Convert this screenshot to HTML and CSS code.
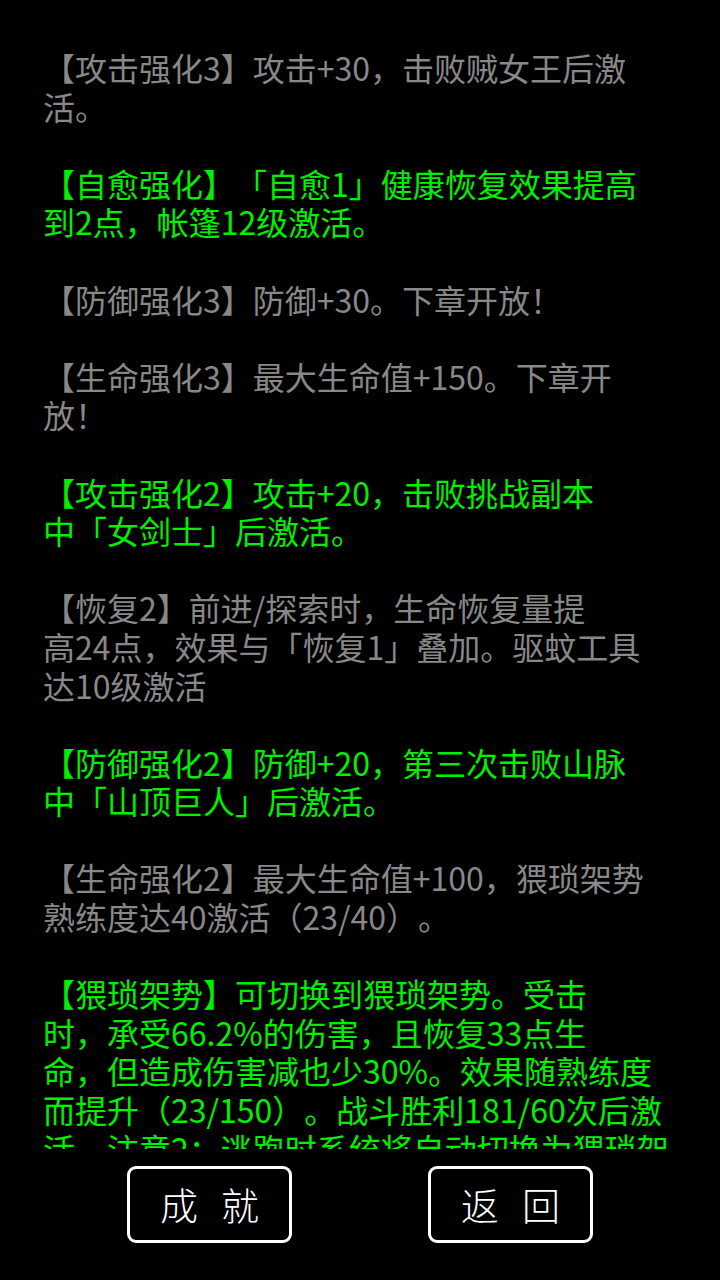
FILE: index.html
```html
<!DOCTYPE html>
<html lang="zh-CN">
<head>
<meta charset="utf-8">
<title>强化</title>
<link rel="stylesheet" href="styles.css">
</head>
<body>
<div class="screen">
  <div class="log">
    <p class="entry off">【攻击强化3】攻击+30，击败贼女王后激<br>活。</p>
    <p class="entry on">【自愈强化】「自愈1」健康恢复效果提高<br>到2点，帐篷12级激活。</p>
    <p class="entry off">【防御强化3】防御+30。下章开放<span class="ctr">！</span></p>
    <p class="entry off">【生命强化3】最大生命值+150。下章开<br>放<span class="ctr">！</span></p>
    <p class="entry on">【攻击强化2】攻击+20，击败挑战副本<br>中「女剑士」后激活。</p>
    <p class="entry off">【恢复2】前进/探索时，生命恢复量提<br>高24点，效果与「恢复1」叠加。驱蚊工具<br>达10级激活</p>
    <p class="entry on">【防御强化2】防御+20，第三次击败山脉<br>中「山顶巨人」后激活。</p>
    <p class="entry off">【生命强化2】最大生命值+100，猥琐架势<br>熟练度达40激活（23/40）。</p>
    <p class="entry on">【猥琐架势】可切换到猥琐架势。受击<br>时，承受66.2%的伤害，且恢复33点生<br>命，但造成伤害减也少30%。效果随熟练度<br>而提升（23/150）。战斗胜利181/60次后激<br>活。注意2：逃跑时系统将自动切换为猥琐架<br>势。</p>
  </div>
  <div class="actions">
    <button class="btn"><span>成</span><span>就</span></button>
    <button class="btn"><span>返</span><span>回</span></button>
  </div>
</div>
</body>
</html>
```
FILE: styles.css
```css
html, body {
  margin: 0;
  padding: 0;
  background: #000;
}
body {
  width: 720px;
  height: 1280px;
  overflow: hidden;
  font-family: "Noto Sans CJK SC", "Noto Sans", sans-serif;
  text-spacing-trim: space-all;
}
.screen {
  display: flex;
  flex-direction: column;
  height: 1280px;
}
.log {
  height: 1101px;
  padding: 48px 0 0 43px;
  overflow: hidden;
  flex: none;
}
.entry {
  margin: 0 0 38.6px 0;
  font-size: 32px;
  line-height: 38.6px;
  white-space: nowrap;
  text-spacing-trim: space-all;
}
.ctr {
  font-family: "Noto Sans CJK TC", "Noto Sans CJK SC", sans-serif;
}
.off { color: #888888; }
.on { color: #00f000; }
.actions {
  display: flex;
  justify-content: center;
  gap: 136px;
  padding-top: 17px;
}
.btn {
  width: 165px;
  height: 77px;
  box-sizing: border-box;
  border: 3px solid #fff;
  border-radius: 9px;
  background: #000;
  color: #fff;
  font-family: "Noto Sans CJK SC", sans-serif;
  font-weight: 300;
  font-size: 38px;
  display: flex;
  align-items: center;
  justify-content: center;
  gap: 23px;
  padding: 0 0 3px 0;
}
```
